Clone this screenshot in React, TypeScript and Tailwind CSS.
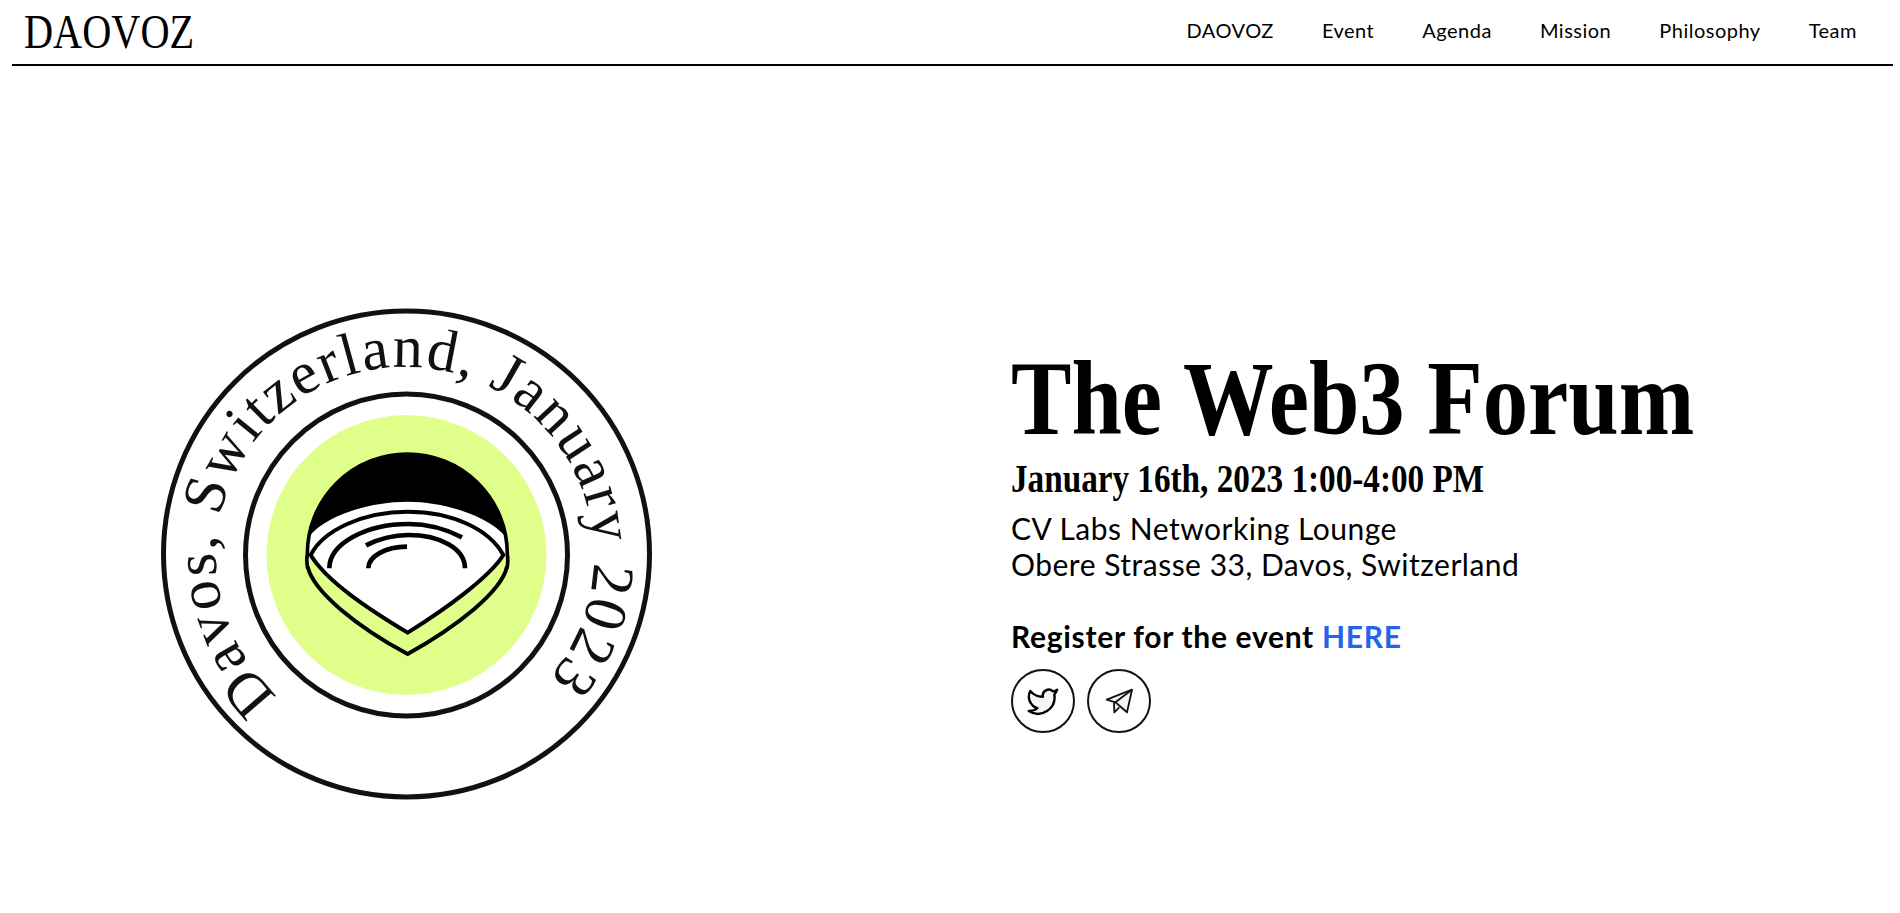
import { Twitter } from "lucide-react";

const navItems = ["DAOVOZ", "Event", "Agenda", "Mission", "Philosophy", "Team"];

const body = "font-['Lato','Noto_Sans',sans-serif]";
const display = "font-['Liberation_Serif',serif]";

const Emblem = () => (
  <svg viewBox="146 295 520 520" className="w-[520px] h-[520px] shrink-0">
    <circle cx="406.5" cy="554" r="243" fill="none" stroke="#111" strokeWidth="5" />
    <circle cx="406.5" cy="555" r="161" fill="none" stroke="#111" strokeWidth="5" />
    <circle cx="406.5" cy="555" r="140" fill="#e0ff8a" />
    <path id="ring" d="M 278 696 A 189 189 0 1 1 510 713" fill="none" />
    <text fontFamily="'Liberation Serif', serif" fontSize="60" letterSpacing="2" fill="#111">
      <textPath href="#ring">Davos, Switzerland, January 2023</textPath>
    </text>
    {/* coords taken from the 3x crop */}
    <g transform="translate(290 440) scale(0.3333)">
      <path
        d="M52 342 A300 300 0 0 1 652 342 L640 345 C600 410 470 505 353 578 C240 510 110 425 62 345 Z"
        fill="#fff"
      />
      <path d="M56.6 290 A300 300 0 0 1 647.4 290 C590 225 460 185 353 185 C240 185 110 225 56.6 290 Z" fill="#000" />
      <path
        d="M53 385 C50 370 50 355 52 342 A300 300 0 0 1 652 342 C654 355 654 370 651 385"
        fill="none"
        stroke="#000"
        strokeWidth="11"
      />
      <path
        d="M62 345 C100 270 220 215 353 215 C490 215 600 270 640 345 C600 410 470 505 353 578 C240 510 110 425 62 345 Z"
        fill="none"
        stroke="#000"
        strokeWidth="12"
      />
      <path
        d="M53 380 C70 455 200 560 353 642 C500 560 635 455 651 380"
        fill="none"
        stroke="#000"
        strokeWidth="12"
      />
      <path d="M118 385 C118 310 230 252 355 252 C420 252 470 268 516 292" fill="none" stroke="#000" strokeWidth="14" />
      <path d="M228 316 C270 295 310 285 355 285 C450 285 525 325 525 385" fill="none" stroke="#000" strokeWidth="14" />
      <path d="M235 385 C235 350 285 320 351 320" fill="none" stroke="#000" strokeWidth="14" />
    </g>
  </svg>
);

const PlaneIcon = () => (
  <svg viewBox="0 0 32 32" className="w-8 h-8" fill="#f5f5f5" stroke="#111" strokeWidth="1.8" strokeLinejoin="round">
    <path d="M29 4.7 L3.7 14.7 L12.3 17.3 L24 27.3 Z" />
    <path d="M12.3 17.3 L29 4.7" />
    <path d="M11 18 L11.3 27.3 L16.3 22.3" />
  </svg>
);

const SocialLink = ({ children }: { children: React.ReactNode }) => (
  <a className="w-16 h-16 rounded-full border-2 border-[#111] flex items-center justify-center">{children}</a>
);

export default function App() {
  return (
    <div className={`${body} bg-white text-black h-[913px] overflow-hidden`}>
      <header className="ml-3 mr-[7px] h-[66px] border-b-2 border-black flex items-center justify-between pl-3 pr-[36px]">
        <span className={`${display} text-[48px] leading-none scale-x-[0.84] origin-left`}>DAOVOZ</span>
        <nav className="flex items-center gap-12 text-xl tracking-[0.025em] -mt-1">
          {navItems.map((item) => (
            <a key={item}>{item}</a>
          ))}
        </nav>
      </header>
      <main className="flex items-start pl-[146px] pt-[229px]">
        <Emblem />
        <div className="ml-[345px] pt-[51px] flex flex-col">
          <h1 className={`${display} text-[106px] leading-[1] mb-[3px] font-bold scale-x-[0.855] origin-left whitespace-nowrap`}>
            The Web3 Forum
          </h1>
          <p className={`${display} text-[40px] leading-[1.2] mb-[7px] font-bold scale-x-[0.83] origin-left whitespace-nowrap`}>
            January 16th, 2023 1:00-4:00 PM
          </p>
          <p className="text-3xl leading-9 tracking-[0.5px]">CV Labs Networking Lounge</p>
          <p className="text-3xl leading-9 tracking-[0.5px]">Obere Strasse 33, Davos, Switzerland</p>
          <p className="text-3xl leading-9 font-bold mt-9 tracking-[0.7px]">
            Register for the event <span className="text-[#2563eb]">HERE</span>
          </p>
          <div className="flex gap-3 mt-[15px]">
            <SocialLink>
              <Twitter size={34} strokeWidth={1.7} fill="#f5f5f5" />
            </SocialLink>
            <SocialLink>
              <PlaneIcon />
            </SocialLink>
          </div>
        </div>
      </main>
    </div>
  );
}
